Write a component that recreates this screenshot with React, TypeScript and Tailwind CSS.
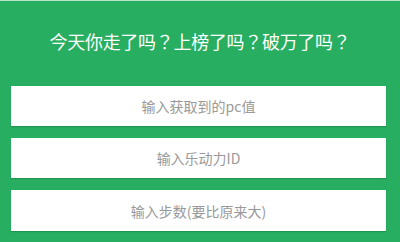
import React from "react";

export default function App() {
  const font = { fontFamily: '"Noto Sans CJK SC", "Noto Sans", sans-serif' };
  const titleFont = { fontFamily: '"Noto Sans CJK TC", "Noto Sans CJK SC", sans-serif' };
  return (
    <div
      className="w-[400px] h-[242px] bg-[#28ae60] border-t border-[#b9e3c9] overflow-hidden"
      style={font}
    >
      <div className="h-[85px] flex items-start justify-center pt-[27px]">
        <h1
          className="text-[18px] leading-[26px] text-white font-normal tracking-[-0.3px]"
          style={titleFont}
        >
          今天你走了吗？上榜了吗？破万了吗？
        </h1>
      </div>
      <div className="flex flex-col gap-[12px] pl-[11px] pr-[14px]">
        <input
          className="h-[40px] w-full bg-white text-center text-[14px] text-[#555] placeholder:text-[#999] outline-none shadow-[0_1px_1px_rgba(0,0,0,0.15)]"
          placeholder="输入获取到的pc值"
        />
        <input
          className="h-[40px] w-full bg-white text-center text-[14px] text-[#555] placeholder:text-[#999] outline-none shadow-[0_1px_1px_rgba(0,0,0,0.15)]"
          placeholder="输入乐动力ID"
        />
        <input
          className="h-[41px] w-full bg-white text-center text-[14px] text-[#555] placeholder:text-[#999] outline-none shadow-[0_1px_1px_rgba(0,0,0,0.15)]"
          placeholder="输入步数(要比原来大)"
        />
      </div>
    </div>
  );
}
